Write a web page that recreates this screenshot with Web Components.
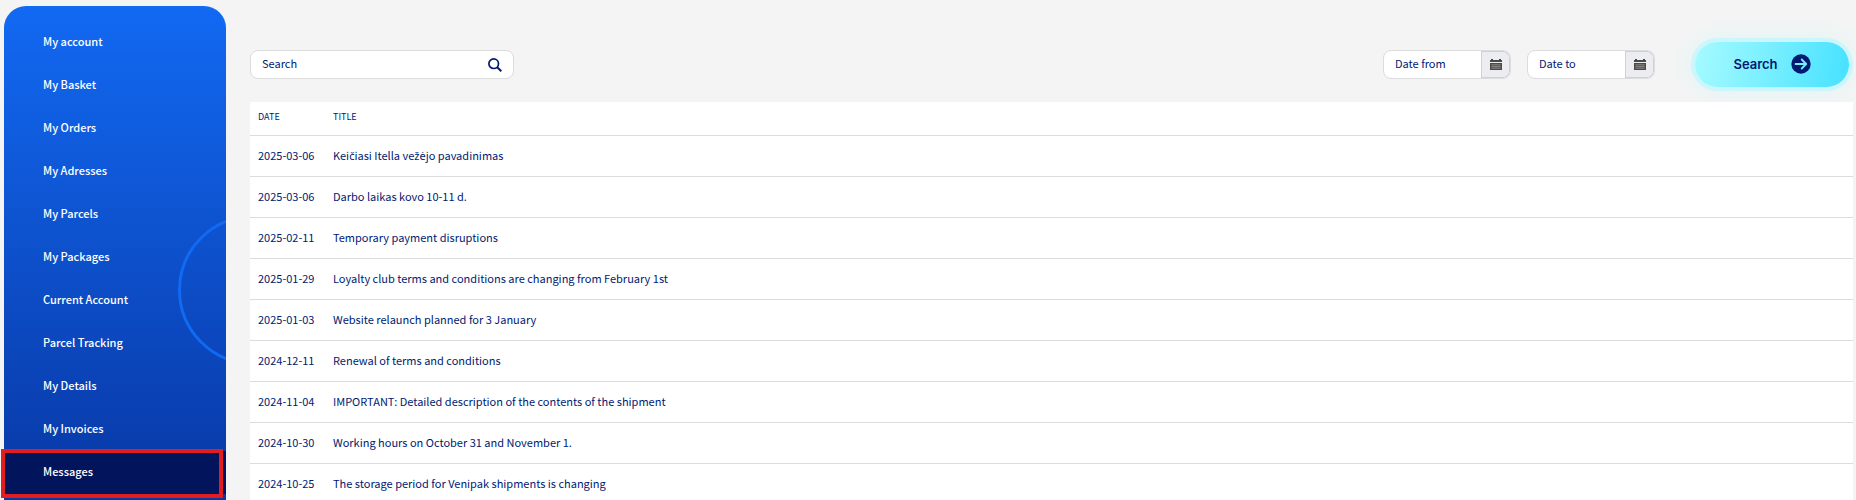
<!DOCTYPE html>
<html lang="en">
<head>
<meta charset="utf-8">
<meta name="viewport" content="width=device-width, initial-scale=1">
<title>Messages</title>
<style>
html, body { margin: 0; background: #f4f4f4; }
body {
  --ink: #001a72;
  --line: #dcdcdc;
  color: var(--ink);
  font: 11px/20px "Noto Sans CJK SC", "Noto Sans", sans-serif;
}
</style>
</head>
<body>
<account-page>
  <side-nav slot="nav">
    <nav-item href="#account">My account</nav-item>
    <nav-item href="#basket">My Basket</nav-item>
    <nav-item href="#orders">My Orders</nav-item>
    <nav-item href="#addresses">My Adresses</nav-item>
    <nav-item href="#parcels">My Parcels</nav-item>
    <nav-item href="#packages">My Packages</nav-item>
    <nav-item href="#current">Current Account</nav-item>
    <nav-item href="#tracking">Parcel Tracking</nav-item>
    <nav-item href="#details">My Details</nav-item>
    <nav-item href="#invoices">My Invoices</nav-item>
    <nav-item href="#messages" current>Messages</nav-item>
  </side-nav>
  <filter-bar>
    <search-field label="Search"></search-field>
    <date-field label="Date from"></date-field>
    <date-field label="Date to"></date-field>
    <glow-button>Search</glow-button>
  </filter-bar>
  <message-table></message-table>
</account-page>

<script>
const define = (name, html, setup) => customElements.define(name, class extends HTMLElement {
  connectedCallback() {
    if (this.shadowRoot) return;
    const root = this.attachShadow({ mode: "open" });
    root.innerHTML = "<style>*{box-sizing:border-box}</style>" + html;
    if (setup) setup(this, root);
  }
});

define("account-page", `
<style>
:host { display: grid; grid-template-columns: 222px minmax(0, 1fr); gap: 24px; height: 100vh; overflow: hidden; padding: 6px 3px 0 4px; box-sizing: border-box; }
main { min-width: 0; padding-top: 36px; }
</style>
<slot name="nav"></slot>
<main><slot></slot></main>`);

define("side-nav", `
<style>
:host { display: block; position: relative; border-radius: 22px 22px 0 0; background: linear-gradient(#1269f2, #0837a4); }
nav { padding-top: 15px; position: relative; }
.clip { position: absolute; inset: 0; overflow: hidden; }
.ring { position: absolute; left: 174px; top: 209px; width: 150px; height: 150px; border: 3px solid #1269f2; border-radius: 50%; }
</style>
<div class="clip"><div class="ring"></div></div>
<nav aria-label="Account"><slot></slot></nav>`);

define("nav-item", `
<style>
:host { display: block; position: relative; }
a { display: flex; align-items: center; height: 43px; padding: 0 39px 3px; color: #fff; font-weight: 500; text-decoration: none; }
:host([current]) a { background: #02145c; }
:host([current])::after { content: ""; position: absolute; inset: -2px 3px -4px -3px; border: 4px solid #e21d22; pointer-events: none; }
</style>
<a><slot></slot></a>`, (host, root) => {
  const a = root.querySelector("a");
  a.href = host.getAttribute("href");
  if (host.hasAttribute("current")) a.setAttribute("aria-current", "page");
});

define("filter-bar", `
<style>
:host { display: flex; align-items: center; gap: 16px; height: 45px; padding-right: 4px; margin-bottom: 15px; }
::slotted(search-field) { margin-right: auto; }
::slotted(glow-button) { margin-left: 24px; }
</style>
<slot></slot>`);

const fieldStyle = `
:host { display: flex; height: 29px; box-sizing: border-box; border: 1px solid var(--line); border-radius: 8px; background: #fff; overflow: hidden; }
input { flex: 1; min-width: 0; border: 0; outline: 0; padding: 0 0 3px 11px; background: none; font: inherit; color: inherit; }
input::placeholder { color: inherit; opacity: 1; }
button { display: grid; place-items: center; border: 0; padding: 0; color: inherit; cursor: pointer; }`;

define("search-field", `
<style>${fieldStyle}
:host { width: 264px; }
button { width: 36px; background: none; }
</style>
<input type="text">
<button type="button" aria-label="Run search">
<svg width="14" height="14" viewBox="0 0 14 14" fill="none" stroke="currentColor" stroke-width="1.7"><circle cx="5.7" cy="5.7" r="4.8"/><path d="M9.2 9.2 13.3 13.3" stroke-width="2"/></svg>
</button>`, (host, root) => {
  const input = root.querySelector("input");
  input.placeholder = host.getAttribute("label");
  input.setAttribute("aria-label", input.placeholder);
});

define("date-field", `
<style>${fieldStyle}
:host { width: 128px; }
button { width: 29px; background: #ecedf0; color: #4a4a4a; box-shadow: inset 0 0 0 1px #d0d1d3; border-radius: 0 7px 7px 0; }
</style>
<input type="text">
<button type="button" aria-label="Open calendar">
<svg width="12" height="11" viewBox="0 0 12 11"><path fill="currentColor" d="M0 1h1V0h2v1h6V0h2v1h1v2H0zM0 4h12v7H0z"/><path stroke="#a09a94" stroke-width=".5" d="M1 5.75h10M1 7.5h10M1 9.25h10M3 5v5M5 5v5M7 5v5M9 5v5"/></svg>
</button>`, (host, root) => {
  const input = root.querySelector("input");
  input.placeholder = host.getAttribute("label");
  input.setAttribute("aria-label", input.placeholder);
});

define("glow-button", `
<style>
:host { display: block; }
button { display: flex; align-items: center; justify-content: center; gap: 13px; width: 154px; height: 45px; border: 0; border-radius: 23px; padding: 0 0 2px; color: var(--ink); background: linear-gradient(100deg, #a6fbff, #46e1ff); box-shadow: 0 0 0 4px #cbf7fc, 0 0 24px 4px #dff5f6; font: 600 13px/20px Inter, sans-serif; cursor: pointer; }
</style>
<button type="button"><slot></slot>
<svg width="20" height="20" viewBox="0 0 20 20" fill="none"><circle cx="10" cy="10" r="9.7" fill="#001a72"/><path d="M4.5 10H15M10.7 5.5 15.2 10l-4.5 4.5" stroke="#74efff" stroke-width="1.8" stroke-linecap="round" stroke-linejoin="round"/></svg>
</button>`);

const messages = [
  ["2025-03-06", "Keičiasi Itella vežėjo pavadinimas"],
  ["2025-03-06", "Darbo laikas kovo 10-11 d."],
  ["2025-02-11", "Temporary payment disruptions"],
  ["2025-01-29", "Loyalty club terms and conditions are changing from February 1st"],
  ["2025-01-03", "Website relaunch planned for 3 January"],
  ["2024-12-11", "Renewal of terms and conditions"],
  ["2024-11-04", "IMPORTANT: Detailed description of the contents of the shipment"],
  ["2024-10-30", "Working hours on October 31 and November 1."],
  ["2024-10-25", "The storage period for Venipak shipments is changing"]
];

// The CJK face has no Lithuanian letters; set those in Noto Sans.
const withAccents = text => text.replace(/[čžė]+/g, "<span>$&</span>");

define("message-table", `
<style>
:host { display: block; position: relative; background: #fff; }
table { width: 100%; border-collapse: separate; border-spacing: 0; table-layout: fixed; }
th, td { padding: 0 8px 3px; text-align: left; white-space: nowrap; border-bottom: 1px solid var(--line); }
th { height: 34px; font-size: 9px; font-weight: 400; text-transform: uppercase; }
td { height: 41px; }
th:first-child { width: 75px; }
span { font-family: "Noto Sans", sans-serif; line-height: 1; }
</style>
<table>
<thead><tr><th scope="col">Date</th><th scope="col">Title</th></tr></thead>
<tbody>${messages.map(([d, t]) => `<tr><td>${d}</td><td>${withAccents(t)}</td></tr>`).join("")}</tbody>
</table>`);
</script>
</body>
</html>
